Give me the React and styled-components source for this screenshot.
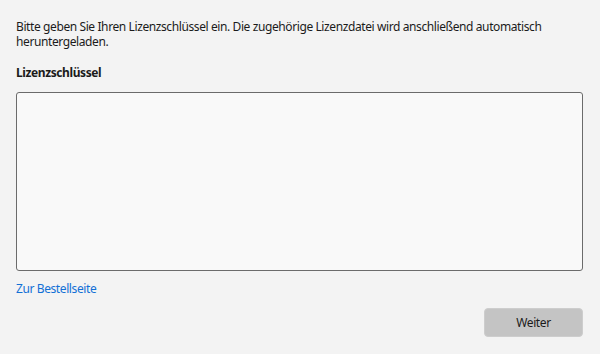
import React from 'react';
import styled, { createGlobalStyle } from 'styled-components';

const GlobalStyle = createGlobalStyle`
  html, body {
    margin: 0;
    padding: 0;
    background: #f3f3f3;
  }
  body {
    font-family: "Noto Sans", "Open Sans", sans-serif;
    font-size: 12px;
    color: #1b1b1b;
  }
`;

const Page = styled.div`
  width: 600px;
  height: 354px;
  box-sizing: border-box;
  padding: 19px 17px 0 16px;
  display: flex;
  flex-direction: column;
`;

const Intro = styled.p`
  margin: 0;
  line-height: 15px;
  letter-spacing: -0.4px;
`;

const Label = styled.label`
  margin-top: 16px;
  font-weight: 700;
  line-height: 16px;
  letter-spacing: -0.4px;
`;

const KeyInput = styled.textarea`
  margin-top: 11px;
  height: 179px;
  box-sizing: border-box;
  border: 1px solid #6b6b6b;
  border-radius: 3px;
  background: #f9f9f9;
  resize: none;
  outline: none;
  font: inherit;
  padding: 6px 8px;
`;

const ShopLink = styled.a`
  margin-top: 10px;
  color: #1170d6;
  text-decoration: none;
  line-height: 16px;
  align-self: flex-start;
  letter-spacing: -0.4px;
  cursor: pointer;
`;

const Footer = styled.div`
  margin-top: 11px;
  display: flex;
  justify-content: flex-end;
`;

const Button = styled.button`
  width: 99px;
  height: 29px;
  border: 1px solid #cdcdcd;
  border-radius: 4px;
  background: #c4c4c4;
  color: #1b1b1b;
  font: inherit;
  letter-spacing: -0.4px;
  cursor: default;
`;

export default function App() {
  return (
    <>
      <GlobalStyle />
      <Page>
        <Intro>
          Bitte geben Sie Ihren Lizenzschlüssel ein. Die zugehörige Lizenzdatei wird anschließend automatisch heruntergeladen.
        </Intro>
        <Label htmlFor="key">Lizenzschlüssel</Label>
        <KeyInput id="key" />
        <ShopLink>Zur Bestellseite</ShopLink>
        <Footer>
          <Button>Weiter</Button>
        </Footer>
      </Page>
    </>
  );
}
